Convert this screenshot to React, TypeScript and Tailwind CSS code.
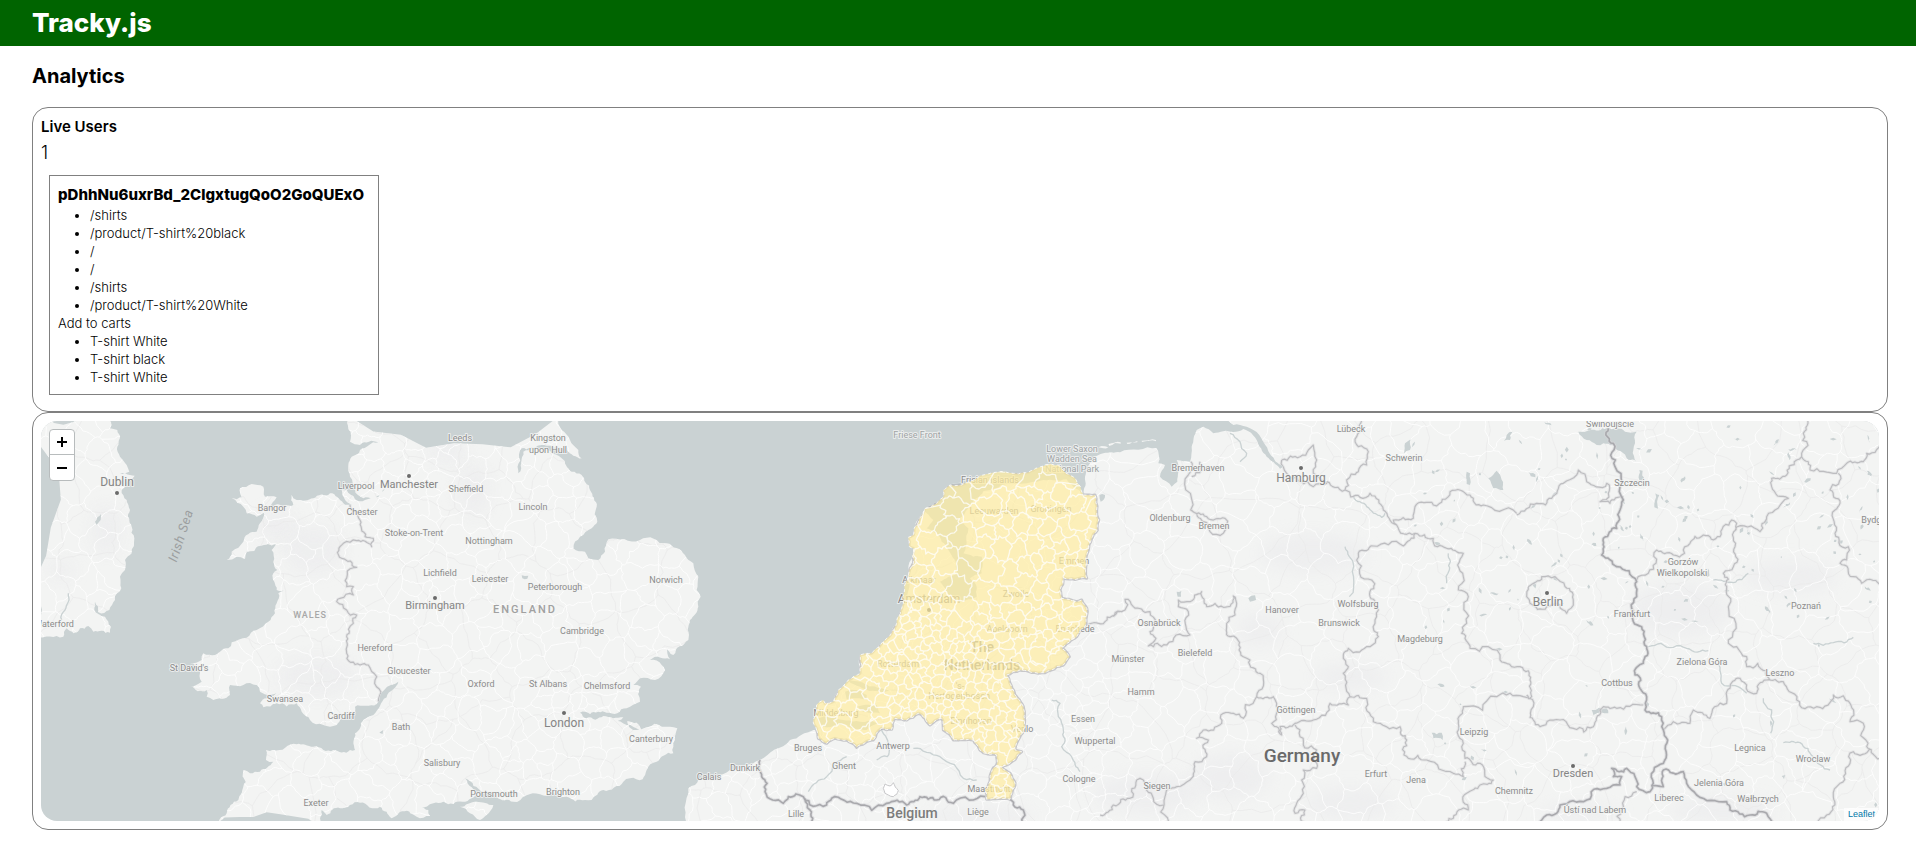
import React from "react";

type Pt = [number, number];
type Edge = { a: Pt; b: Pt; n: number };

/* Map drawing units: three per pixel, shared by every outline below. */
const UNIT = 3;
const ORIGIN = 33;
const MAP_W = 1838;
const MAP_H = 400;

const pts = (s: string, dx = 0, dy = 0): Pt[] =>
  s
    .trim()
    .split(/\s+/)
    .map((p) => {
      const [x, y] = p.split(",").map(Number);
      return [x + dx, y + dy] as Pt;
    });

const britain = (s: string) => pts(s, 930);
const lowlands = (s: string) => pts(s, 1950);
const germany = (s: string) => pts(s, 3210);
const poland = (s: string) => pts(s, 4410, -30);

const makeRandom = (seed: number) => () => {
  seed = (seed + 0x6d2b79f5) | 0;
  let t = Math.imul(seed ^ (seed >>> 15), 1 | seed);
  t = (t + Math.imul(t ^ (t >>> 7), 61 | t)) ^ t;
  return ((t ^ (t >>> 14)) >>> 0) / 4294967296;
};

/* Midpoint displacement, so straight runs read as coast or border. */
const roughen = (line: Pt[], amount: number, seed: number, closed = false): Pt[] => {
  const rnd = makeRandom(seed);
  let cur = closed ? [...line, line[0]] : line;
  for (let pass = 0; pass < 3; pass++) {
    const out: Pt[] = [cur[0]];
    for (let i = 1; i < cur.length; i++) {
      const [x1, y1] = cur[i - 1];
      const [x2, y2] = cur[i];
      const len = Math.hypot(x2 - x1, y2 - y1);
      if (len > 12 && len < 1500) {
        const k = (rnd() - 0.5) * amount;
        out.push([(x1 + x2) / 2 - (y2 - y1) * k, (y1 + y2) / 2 + (x2 - x1) * k]);
      }
      out.push(cur[i]);
    }
    cur = out;
  }
  return cur;
};

const toPath = (line: Pt[], closed = false) =>
  "M" + line.map(([x, y]) => `${x.toFixed(1)} ${y.toFixed(1)}`).join("L") + (closed ? "Z" : "");

const inside = ([x, y]: Pt, poly: Pt[]) => {
  let hit = false;
  for (let i = 0, j = poly.length - 1; i < poly.length; j = i++) {
    const [xi, yi] = poly[i];
    const [xj, yj] = poly[j];
    if (yi > y !== yj > y && x < ((xj - xi) * (y - yi)) / (yj - yi) + xi) hit = !hit;
  }
  return hit;
};

/* Voronoi edges by half-plane clipping of each cell. */
const voronoi = (seeds: Pt[], reach: number): Edge[] => {
  const edges: Edge[] = [];
  seeds.forEach((s, i) => {
    let cell: { p: Pt; n: number }[] = [
      { p: [s[0] - reach, s[1] - reach], n: -1 },
      { p: [s[0] + reach, s[1] - reach], n: -1 },
      { p: [s[0] + reach, s[1] + reach], n: -1 },
      { p: [s[0] - reach, s[1] + reach], n: -1 },
    ];
    seeds.forEach((q, j) => {
      if (i === j || Math.abs(q[0] - s[0]) > reach * 2 || Math.abs(q[1] - s[1]) > reach * 2) return;
      const nx = q[0] - s[0];
      const ny = q[1] - s[1];
      const c = (q[0] * q[0] + q[1] * q[1] - s[0] * s[0] - s[1] * s[1]) / 2;
      const side = (p: Pt) => p[0] * nx + p[1] * ny - c;
      const next: { p: Pt; n: number }[] = [];
      for (let k = 0; k < cell.length; k++) {
        const cur = cell[k];
        const nxt = cell[(k + 1) % cell.length];
        const d1 = side(cur.p);
        const d2 = side(nxt.p);
        const cut = (): Pt => {
          const t = d1 / (d1 - d2);
          return [cur.p[0] + (nxt.p[0] - cur.p[0]) * t, cur.p[1] + (nxt.p[1] - cur.p[1]) * t];
        };
        if (d1 <= 0) {
          next.push(cur);
          if (d2 > 0) next.push({ p: cut(), n: j });
        } else if (d2 <= 0) {
          next.push({ p: cut(), n: cur.n });
        }
      }
      cell = next;
    });
    cell.forEach((v, k) => {
      if (v.n > i) edges.push({ a: v.p, b: cell[(k + 1) % cell.length].p, n: v.n });
    });
  });
  return edges;
};

const edgesToPath = (edges: Edge[], amount: number, seed: number) =>
  edges.map((e, i) => toPath(roughen([e.a, e.b], amount, seed + i))).join("");

const scatter = (
  count: number,
  box: [number, number, number, number],
  radius: (p: Pt) => number,
  accept: (p: Pt) => boolean,
  seed: number,
): Pt[] => {
  const rnd = makeRandom(seed);
  const out: Pt[] = [];
  for (let i = 0; i < count; i++) {
    const p: Pt = [box[0] + rnd() * (box[2] - box[0]), box[1] + rnd() * (box[3] - box[1])];
    const loose = 0.62 + rnd() * 0.75;
    if (!accept(p)) continue;
    const r = radius(p) * loose;
    if (out.every((q) => Math.hypot(q[0] - p[0], q[1] - p[1]) > r)) out.push(p);
  }
  return out;
};

/* ---------- Coastlines ---------- */

const ireland = pts(
  "20,20 235,20 240,55 262,60 262,110 270,140 290,165 298,185 270,190 300,195 314,197 290,215 275,240 290,270 300,300 305,350 313,385 305,430 285,450 285,480 270,500 274,535 255,570 238,600 205,607 195,575 193,600 205,612 225,620 243,650 240,668 215,662 190,665 175,648 150,655 130,670 110,655 100,680 20,685",
);

const greatBritain: Pt[] = [
  ...britain("30,20 30,95 60,105 115,97 60,120 35,140 25,165 30,200 45,238 70,265 100,265 135,235 115,262 75,270 45,268 20,240"),
  ...pts(
    "935,240 965,285 940,280 900,250 850,265 800,270 785,255 790,285 735,285 700,305 690,340 680,365 640,395 605,425 590,450 620,440 645,447 650,425 690,408 738,403 725,420 730,455 742,480 730,490 733,515 740,540 770,540 745,550 740,580 735,610 715,635 680,660 650,683 605,697 595,715 570,725 555,735 520,730 515,750 480,760 510,780 515,815 480,830 530,840 530,860 550,870 600,855 600,825 640,825 680,825 690,845 720,855 740,850 710,865 690,880 700,892 740,880 800,880 815,905 840,930 880,945 920,945 935,925 975,905",
  ),
  ...britain("45,890 110,882 175,815 160,838 120,888 70,930 45,970 45,1020 30,1020 -20,1020"),
  ...pts("880,1020 850,1010 800,1003 730,1020 708,1020 708,1050 730,1055 690,1085 660,1090 640,1080 635,1150 625,1170 590,1210 550,1250 870,1250 875,1200 890,1215 930,1195"),
  ...britain(
    "60,1178 120,1190 155,1225 180,1205 230,1220 270,1218 265,1200 240,1190 280,1180 340,1182 395,1165 420,1155 375,1105 430,1145 470,1160 520,1175 600,1153 680,1160 735,1170 755,1170 790,1140 850,1115 870,1105 908,1108 920,1080 950,1055 1000,1030 1005,990 1012,955 990,950 900,960 860,945 820,935 850,922 790,918 740,925 720,908 750,912 800,908 860,895 900,875 903,830 880,825 900,805 945,810 975,780 965,765 930,750 990,748 980,710 1000,735 1045,690 1050,630 1075,590 1082,560 1070,540 1075,500 1060,460 1035,435 980,400 900,390 805,388 795,425 775,450 745,445 735,425 700,415 720,380 755,355 772,335 770,290 750,240 725,195 695,185 665,145 630,122 580,112 550,125 535,190 545,115 600,106 640,113 680,120 725,145 715,120 690,90 665,60 655,20",
  ),
];

const islands: Pt[][] = [
  pts("630,235 665,222 700,230 705,260 740,262 715,290 680,320 650,310 640,290 605,265 635,262"),
  britain("360,1190 410,1175 460,1185 440,1215 420,1230 390,1210"),
  britain("862,933 890,938 905,960 872,955"),
  lowlands("1255,112 1275,109 1285,112 1270,115"),
  germany("25,103 62,97 62,101 28,107"),
  germany("80,98 112,93 112,97 82,102"),
  germany("125,92 168,90 168,94 126,96"),
];

const dutchCoast =
  "410,960 400,930 410,885 430,870 435,880 460,875 475,840 505,810 540,790 540,735 575,730 620,685 650,640 670,580 685,500 700,415 688,410 685,382 700,375 705,350 735,295 790,262 790,240 810,225 900,197 1000,190 1060,180 1090,168 1135,165 1185,205 1210,255";

const netherlands = lowlands(
  dutchCoast +
    " 1245,255 1250,300 1252,360 1225,420 1220,505 1150,503 1140,540 1145,565 1190,575 1205,570 1222,605 1215,650 1190,680 1145,715 1168,740 1150,765 1075,790 1020,780 980,795 1000,840 1030,890 1035,950 1005,1020 1025,1025 980,1065 965,1072 990,1090 1005,1120 990,1168 920,1168 915,1140 935,1085 950,1065 950,1035 900,1020 880,990 820,990 790,960 785,925 750,945 715,910 680,930 645,925 635,958 605,955 580,990 530,1012 500,990 465,985 440,1000 415,985",
);

const continent: Pt[] = [
  ...lowlands("25,1250 25,1135 45,1125 55,1110 150,1080 240,1050 330,990 400,960"),
  ...lowlands(dutchCoast),
  ...lowlands("1215,200 1240,145 1270,130"),
  ...germany(
    "60,127 170,115 175,160 195,165 180,200 215,230 232,215 235,185 230,150 270,155 275,110 290,60 310,50 340,70 400,66 430,57 445,64 470,90 500,140 540,176 550,170 510,132 490,95 460,60 440,50 400,45 365,20",
  ),
  [5700, 20],
  [5700, 1260],
];

const dutchWater: Pt[][] = [
  lowlands(
    "730,300 755,280 790,262 792,238 900,198 908,250 865,295 835,330 865,355 860,400 850,430 880,440 905,440 905,490 870,505 890,530 890,560 840,575 800,545 780,515 830,490 825,450 805,420 785,395 770,370 740,355 760,330",
  ),
  lowlands("900,200 1000,192 1060,182 1135,167 1185,207 1205,250 1160,208 1080,212 1000,222 930,240 900,250"),
  lowlands("495,845 520,840 560,855 560,870 500,868"),
  lowlands("410,925 460,918 540,935 600,940 560,960 500,945 430,950"),
  lowlands("530,890 590,885 600,910 550,905"),
  lowlands("505,812 540,815 600,835 660,840 600,845 540,830"),
];

const inlandWater: Pt[][] = [
  poland("235,95 270,90 320,85 350,85 375,95 410,95 405,130 400,150 408,185 370,160 340,135 310,130 290,135 260,120"),
  poland("418,210 428,212 432,240 418,240"),
  poland("466,280 478,285 474,326 463,322"),
  germany("1165,205 1190,182 1210,240 1180,235"),
  germany("915,100 932,88 930,120 912,130"),
  germany("1100,185 1110,190 1110,225 1100,222"),
  germany("1220,75 1238,65 1230,90 1212,92"),
  germany("445,565 465,556 468,570 450,575"),
  germany("230,545 244,543 243,560 233,560"),
  germany("995,968 1025,968 1028,990 1000,985"),
  lowlands("1258,255 1275,255 1272,268 1262,275"),
  britain("545,496 565,497 562,506 547,505"),
  britain("118,968 130,960 128,972"),
  pts("195,335 213,312 212,330 200,345"),
  poland("275,930 320,925 325,940 280,945"),
  poland("845,1128 856,1125 852,1138"),
];

/* ---------- Borders ---------- */

const regionBorders: Pt[][] = [
  britain("30,285 60,330 75,380 100,385 95,410 50,392 10,400 5,445 50,472 20,530 40,530 40,555 0,565 -10,575 20,600 50,615 40,640 20,680 20,730 60,765 85,765 110,800 115,875"),
  lowlands("1222,645 1275,635 1320,605"),
  germany(
    "40,620 75,600 75,568 100,590 150,605 165,640 150,665 168,685 145,708 200,705 270,675 265,605 235,590 235,570 270,575 305,545 320,590 370,592 400,558 410,580 380,640 390,680 410,685 430,740 450,750 480,790 470,860 430,925 400,910 370,910 365,940 310,960 290,985 325,990 320,1040 285,1055 270,1110 230,1130 195,1160 200,1250",
  ),
  germany("0,1215 40,1185 90,1165 110,1110 130,1110 160,1165 190,1185"),
  germany(
    "470,860 520,860 530,880 515,940 545,975 540,950 585,940 640,930 690,880 745,885 750,860 730,790 745,770 730,735 745,715 810,710 835,680 825,640 835,600 810,560 815,510 770,450 775,430 820,408 910,408 945,370",
  ),
  germany("545,150 600,140 625,120 640,105 650,150 640,190 680,220 640,230 600,215 560,190 545,150"),
  germany("680,215 735,240 780,262 810,250 850,300 890,345 945,370 1000,385 1040,415 1090,430 1090,500 1075,540 1105,560 1100,640 1085,670 1110,715 1200,750 1260,770 1290,810 1295,860 1270,860 1190,860 1090,890 1075,940 1085,1010 1095,1045 1140,1060 1180,1110 1140,1125 1100,1150 1105,1200 1060,1225 1020,1250"),
  poland("80,885 100,920 100,960 120,980 150,960 220,985 280,980 300,930 350,925 430,915"),
  germany("750,860 800,865 820,935 900,950 920,990 925,1045 980,1050 1060,1090 1090,1100 1095,1055"),
  germany("585,945 600,980 650,1020 640,1050 650,1075 610,1080 605,1110 610,1150 590,1180 585,1210 615,1200 612,1250"),
  germany("735,240 740,210 775,185 800,165 805,125 775,110 770,80 800,20"),
  germany("890,345 880,330 940,325 945,290 1000,285 1050,245 1110,255 1150,285 1250,310"),
  poland("50,345 110,310 155,295 190,250 230,225 235,210 260,245 320,250 325,280 300,305 330,310 370,290"),
  germany("272,155 275,180 272,300 320,320 375,325 380,345 370,370 330,365 310,335 275,300"),
  germany("275,200 305,180 300,155"),
  poland("410,540 445,520 470,450 520,465 570,430 610,405 660,410 695,360 710,370 705,440 700,500 670,520 680,560 685,620 685,720 710,740 740,770 740,800 800,812 810,840"),
  poland("705,392 780,395 800,350 865,295 815,260 815,235 860,225 890,180 905,170 910,100 915,50"),
  poland("905,170 930,210 1010,220 1040,190 1090,185 1100,160 1150,125"),
  poland("1015,220 990,270 1020,310 1005,330 1005,400 1045,440 1040,480 1020,490 1060,530 1085,550 1150,555"),
  poland("490,990 520,965 570,970 580,930 630,955 680,910 690,865 720,835 770,880 800,840 850,845 890,900 950,920 1000,885 1050,910 1050,965 1090,970 1100,1040 1150,1075"),
  poland("1110,1045 1060,1055 1050,1090 1020,1150 1000,1190 980,1245 950,1270"),
  poland("85,560 125,530 165,530 195,560 220,605 200,640 180,615 140,620 90,610 80,590 85,560"),
  poland("410,1175 375,1190 360,1270"),
];

const nationalBorders: Pt[][] = [
  lowlands("240,1050 245,1100 255,1145 310,1180 325,1160 370,1160 440,1185 455,1165 530,1180 620,1180 680,1185 720,1160 770,1170 820,1180 915,1160"),
  lowlands("375,1165 390,1200 395,1250"),
  lowlands("990,1168 1030,1200 1045,1250"),
  poland(
    "325,85 340,130 345,200 370,300 360,330 350,385 310,415 305,465 350,500 410,545 410,590 395,625 400,665 425,680 440,740 430,790 405,825 420,865 440,890 435,930 485,950 490,990 503,1020 490,1090 460,1150 450,1175 410,1160 405,1130 380,1105 335,1105 340,1130 365,1130 360,1155 320,1165 260,1200 180,1215 170,1240 140,1245 110,1275",
  ),
  poland("455,1158 490,1160 490,1110 550,1115 560,1150 590,1185 680,1205 690,1230 750,1245 800,1240 820,1275"),
];

/* ---------- Generated detail ---------- */

const landPath = [
  toPath(roughen(ireland, 0.35, 3, true), true),
  toPath(roughen(greatBritain, 0.35, 5, true), true),
  toPath(roughen(continent, 0.2, 7, true), true),
  ...islands.map((p, i) => toPath(roughen(p, 0.3, 20 + i, true), true)),
].join("");

const cities: [number, number, number][] = [
  [1600, 915, 110], [1215, 560, 70], [1140, 220, 90], [1290, 110, 80], [870, 860, 70],
  [3120, 900, 110], [3170, 1130, 70], [3810, 190, 60], [4550, 575, 60], [2550, 1130, 60],
  [4630, 1150, 50], [5330, 1080, 40], [2350, 1210, 50], [1500, 1060, 60],
];

const roadSeeds = scatter(
  5000,
  [0, 0, 5650, 1260],
  ([x, y]) => {
    const c = cities.find(([cx, cy, r]) => Math.hypot(x - cx, y - cy) < r);
    if (c) return 20;
    return x < 2200 ? 52 : x < 3500 ? 62 : 80;
  },
  () => true,
  11,
);
const roadPath = edgesToPath(voronoi(roadSeeds, 170), 0.4, 400);

const minorSeeds = scatter(900, [0, 0, 5650, 1260], () => 105, () => true, 77);
const minorPath = edgesToPath(voronoi(minorSeeds, 300), 0.3, 900);

const lakeSeeds = lowlands(
  "760,325 850,245 825,300 750,395 860,380 875,445 860,475 800,455 830,530 960,215 1045,195 1130,190 940,475 910,550 860,600",
);
const municipalitySeeds = [
  ...lakeSeeds,
  ...scatter(
    5200,
    [2340, 150, 3220, 1180],
    (p) => {
      const x = p[0] - 1950;
      const y = p[1];
      if (x < 600 && y > 780) return 48;
      if (y > 1070) return 17;
      if (y < 500 && x < 860) return y > 420 ? 24 : 50;
      if (y < 560) return 40;
      if (x > 950 && y < 780) return 34;
      return 25;
    },
    (p) => inside(p, netherlands) && lakeSeeds.every((q) => Math.hypot(q[0] - p[0], q[1] - p[1]) > 52),
    42,
  ),
];
const municipalityPath = edgesToPath(voronoi(municipalitySeeds, 200), 0.7, 1300);
const netherlandsPath = toPath(roughen(netherlands, 0.22, 9, true), true);
const dutchWaterPaths = dutchWater.map((w, i) => toPath(roughen(w, 0.2, 50 + i, true), true));

const pondPath = (() => {
  const rnd = makeRandom(31);
  let d = "";
  for (let i = 0; i < 150; i++) {
    const x = 4150 + rnd() * 1400;
    const y = 40 + rnd() * (rnd() > 0.35 ? 600 : 1150);
    const a = rnd() * Math.PI;
    const l = 3 + rnd() * 11;
    const w = 2 + rnd() * 4;
    const ux = Math.cos(a);
    const uy = Math.sin(a);
    const blob: Pt[] = [
      [x - ux * l, y - uy * l],
      [x - uy * w, y + ux * w],
      [x + ux * l, y + uy * l],
      [x + uy * w, y - ux * w],
    ];
    d += toPath(roughen(blob, 0.6, 700 + i, true), true);
  }
  return d;
})();

const waterPath = inlandWater.map((w, i) => toPath(roughen(w, 0.35, 80 + i, true), true)).join("") + pondPath;

const riverPath = [
  lowlands("605,955 620,985 622,1040 590,1050"),
  lowlands("385,1145 440,1100 500,1040"),
  lowlands("700,1015 780,1040 850,1105 890,1110"),
  lowlands("1115,870 1140,880 1135,920 1150,960 1145,1010 1175,1040 1200,1085"),
  germany("390,70 420,95 440,130 420,155"),
  germany("735,410 748,440 748,560"),
  germany("760,260 800,290 845,322 855,310"),
  germany("1045,430 1048,480 1040,520"),
  poland("445,740 520,742 560,745 625,752"),
  poland("650,790 665,850 740,880"),
  poland("790,895 815,930 812,1000"),
  poland("850,1028 900,1028 940,1070 990,1110"),
  poland("940,730 1000,728 1060,712"),
  poland("640,540 700,548 745,520"),
  pts("115,550 105,600 95,630"),
]
  .map((r, i) => toPath(roughen(r, 0.35, 150 + i)))
  .join("");

const regionPath = regionBorders.map((b, i) => toPath(roughen(b, 0.55, 200 + i))).join("");
const nationalPath = nationalBorders.map((b, i) => toPath(roughen(b, 0.5, 300 + i))).join("");
const brusselsPath = toPath(
  roughen(lowlands("610,1135 615,1122 630,1128 640,1118 655,1142 640,1160 625,1155 615,1150"), 0.3, 61, true),
  true,
);

const hills: [number, number, number, number][] = [
  [230, 360, 45, 75], [740, 350, 60, 50], [850, 420, 90, 70], [860, 800, 120, 60], [1330, 240, 50, 80],
  [1250, 120, 60, 40], [3690, 660, 70, 50], [3960, 800, 110, 40], [3350, 1150, 160, 60], [3960, 1180, 130, 50],
  [5080, 1200, 160, 40], [4650, 1210, 120, 30], [3600, 1100, 120, 70], [2850, 1220, 160, 30], [90, 480, 40, 30],
  [3850, 430, 160, 60], [5280, 500, 140, 50], [4950, 600, 150, 80],
];

/* ---------- Labels ---------- */

type Label = [text: string, x: number, y: number, kind?: "town" | "city" | "capital" | "marine"];

const labels: Label[] = [
  ["Dublin", 261, 228, "capital"],
  ["Bangor", 726, 302],
  ["Waterford", 72, 650],
  ["St David's", 476, 784],
  ["Swansea", 765, 876],
  ["Cardiff", 934, 926],
  ["Exeter", 857, 1189],
  ["Liverpool", 977, 236],
  ["Leeds", 1291, 92],
  ["Kingston", 1555, 94],
  ["upon Hull", 1555, 128],
  ["Manchester", 1138, 234, "city"],
  ["Sheffield", 1307, 245],
  ["Lincoln", 1510, 299],
  ["Chester", 996, 314],
  ["Stoke-on-Trent", 1152, 379],
  ["Nottingham", 1377, 402],
  ["Lichfield", 1229, 499],
  ["Leicester", 1381, 516],
  ["Peterborough", 1575, 539],
  ["Norwich", 1909, 519],
  ["Birmingham", 1214, 596, "city"],
  ["Cambridge", 1655, 671],
  ["Hereford", 1034, 723],
  ["Gloucester", 1138, 791],
  ["Oxford", 1353, 831],
  ["St Albans", 1553, 831],
  ["Chelmsford", 1730, 836],
  ["London", 1601, 950, "capital"],
  ["Bath", 1113, 961],
  ["Canterbury", 1864, 996],
  ["Salisbury", 1236, 1068],
  ["Portsmouth", 1393, 1161],
  ["Brighton", 1598, 1156],
  ["Calais", 2037, 1111],
  ["Dunkirk", 2146, 1082],
  ["Lille", 2299, 1220],
  ["Bruges", 2333, 1022],
  ["Ghent", 2442, 1076],
  ["Antwerp", 2589, 1017],
  ["Liège", 2845, 1216],
  ["Maastricht", 2876, 1145],
  ["Friese Front", 2660, 85, "marine"],
  ["Lower Saxon", 3127, 127, "marine"],
  ["Wadden Sea", 3127, 156, "marine"],
  ["National Park", 3127, 186, "marine"],
  ["Frisian Islands", 2880, 220],
  ["Leeuwarden", 2893, 311],
  ["Groningen", 3063, 305],
  ["Emmen", 3133, 461],
  ["Alkmaar", 2666, 518],
  ["Amsterdam", 2697, 580, "capital"],
  ["Zwolle", 2959, 561],
  ["Apeldoorn", 2930, 666],
  ["Enschede", 3134, 666],
  ["Rotterdam", 2603, 770],
  ["'s-", 2790, 838],
  ["Hertogenbosch", 2787, 868],
  ["Eindhoven", 2824, 942],
  ["Middelburg", 2419, 919],
  ["Venlo", 2976, 965],
  ["Essen", 3160, 935],
  ["Wuppertal", 3195, 1002],
  ["Cologne", 3148, 1115],
  ["Bremerhaven", 3504, 182],
  ["Hamburg", 3813, 215, "capital"],
  ["Lübeck", 3963, 66],
  ["Schwerin", 4121, 154],
  ["Oldenburg", 3421, 334],
  ["Bremen", 3552, 357],
  ["Hanover", 3755, 609],
  ["Wolfsburg", 3984, 592],
  ["Brunswick", 3928, 648],
  ["Magdeburg", 4170, 696],
  ["Osnabrück", 3386, 647],
  ["Münster", 3293, 755],
  ["Bielefeld", 3494, 738],
  ["Hamm", 3334, 856],
  ["Göttingen", 3798, 908],
  ["Leipzig", 4333, 976],
  ["Siegen", 3381, 1137],
  ["Erfurt", 4038, 1101],
  ["Jena", 4159, 1119],
  ["Chemnitz", 4452, 1152],
  ["Świnoujście", 4740, 50],
  ["Szczecin", 4807, 227],
  ["Gorzów", 4958, 465],
  ["Wielkopolski", 4957, 499],
  ["Bydgoszcz", 5558, 340],
  ["Berlin", 4553, 588, "capital"],
  ["Frankfurt", 4807, 620],
  ["Poznań", 5327, 597],
  ["Zielona Góra", 5015, 765],
  ["Cottbus", 4760, 829],
  ["Leszno", 5250, 798],
  ["Legnica", 5159, 1022],
  ["Wroclaw", 5349, 1056],
  ["Dresden", 4629, 1101, "city"],
  ["Jelenia Góra", 5066, 1128],
  ["Wałbrzych", 5185, 1175],
  ["Liberec", 4918, 1173],
  ["Ústí nad Labem", 4695, 1209],
];

const labelStyle = {
  town: "fill-[#8c8c8c] text-[9px]",
  city: "fill-[#858585] text-[11px]",
  capital: "fill-[#858585] text-[12px]",
  marine: "fill-[#a0a4a5] text-[9px]",
};

const cityDots: Pt[] = [
  [261, 248], [1138, 199], [1215, 564], [1601, 908], [2697, 600], [3812, 174], [4551, 549], [4630, 1068],
];

const px = (v: number) => Math.round((v - ORIGIN) / UNIT);

function EuropeMap() {
  return (
    <svg
      className="block h-full w-full font-['Roboto','Noto_Sans',sans-serif]"
      viewBox={`0 0 ${MAP_W} ${MAP_H}`}
      preserveAspectRatio="xMidYMid slice"
      role="img"
      aria-label="Map of north-western Europe"
    >
      <defs>
        <clipPath id="land-clip">
          <path d={landPath} />
        </clipPath>
        <clipPath id="netherlands-clip">
          <path d={netherlandsPath} />
        </clipPath>
        <filter id="soften" x="-50%" y="-50%" width="200%" height="200%">
          <feGaussianBlur stdDeviation="22" />
        </filter>
      </defs>
      <rect width={MAP_W} height={MAP_H} fill="#cad2d3" />
      <g transform={`scale(${1 / UNIT}) translate(${-ORIGIN} ${-ORIGIN})`} fill="none" strokeLinejoin="round">
        <path d={landPath} fill="#f3f4f3" />
        <g clipPath="url(#land-clip)">
          {hills.map(([cx, cy, rx, ry]) => (
            <ellipse key={`${cx}-${cy}`} cx={cx} cy={cy} rx={rx} ry={ry} fill="#ebebed" filter="url(#soften)" opacity="0.6" />
          ))}
          <path d={minorPath} stroke="#eaebeb" strokeWidth="2.5" />
          <path d={roadPath} stroke="#ffffff" strokeWidth="3" opacity="0.8" />
          <path d={riverPath} stroke="#cad2d3" strokeWidth="4" />
          <path d={waterPath} fill="#cad2d3" />
          {dutchWaterPaths.map((d) => (
            <path key={d} d={d} fill="#cad2d3" />
          ))}
          <path d={regionPath} stroke="#dedee0" strokeWidth="9" opacity="0.6" />
          <path d={regionPath} stroke="#bdbdc0" strokeWidth="3.5" />
          <path d={brusselsPath} fill="#ffffff" stroke="#c8c8ca" strokeWidth="3" />
          <path d={nationalPath} stroke="#d6d6d8" strokeWidth="11" opacity="0.6" />
          <path d={nationalPath} stroke="#a9a9ad" strokeWidth="5" />
          <path d={netherlandsPath} stroke="#b4b4b8" strokeWidth="9" opacity="0.7" />
        </g>
      </g>
      <g textAnchor="middle" strokeLinejoin="round">
        {cityDots.map(([x, y]) => (
          <circle key={`${x}-${y}`} cx={px(x)} cy={px(y)} r="2" fill="#6b6b6b" />
        ))}
        {labels.map(([text, x, y, kind = "town"]) => (
          <text
            key={text}
            x={px(x)}
            y={px(y)}
            className={labelStyle[kind]}
            stroke="#f3f4f3"
            strokeOpacity="0.8"
            strokeWidth="2"
            paintOrder="stroke"
          >
            {text}
          </text>
        ))}
        <text x={px(840)} y={px(625)} className="fill-[#a8a8a8] text-[9px] font-medium tracking-widest">WALES</text>
        <text x={px(1484)} y={px(608)} className="fill-[#a0a0a0] text-[11px] font-medium tracking-[2px]">ENGLAND</text>
        <text
          transform={`translate(${px(465)} ${px(382)}) rotate(-72)`}
          className="fill-[#9c9fa0] text-[13px] italic tracking-wider"
        >
          Irish Sea
        </text>
        <text x={px(2647)} y={px(1223)} className="fill-[#7c7c7c] text-[14px] font-medium">Belgium</text>
        <text x={px(3817)} y={px(1057)} className="fill-[#6a6a6a] text-[19px] font-medium">Germany</text>
        <text x={px(2855)} y={px(727)} className="fill-[#8a8a8a] text-[14px] font-medium">The</text>
        <text x={px(2855)} y={px(781)} className="fill-[#8a8a8a] text-[14px] font-medium">Netherlands</text>
      </g>
      <g transform={`scale(${1 / UNIT}) translate(${-ORIGIN} ${-ORIGIN})`} fill="none" strokeLinejoin="round">
        <path d={netherlandsPath} fill="#ffeda0" fillOpacity="0.7" />
        <g clipPath="url(#netherlands-clip)">
          <path d={municipalityPath} stroke="#ffffff" strokeWidth="4" opacity="0.75" />
        </g>
        <path d={netherlandsPath} stroke="#ffffff" strokeWidth="3" strokeDasharray="9" opacity="0.8" />
      </g>
    </svg>
  );
}

const visitedPages = [
  "/shirts",
  "/product/T-shirt%20black",
  "/",
  "/",
  "/shirts",
  "/product/T-shirt%20White",
];

const cartItems = ["T-shirt White", "T-shirt black", "T-shirt White"];

function BulletList({ items }: { items: string[] }) {
  return (
    <ul className="list-disc pl-8">
      {items.map((item, i) => (
        <li key={i}>{item}</li>
      ))}
    </ul>
  );
}

export default function App() {
  return (
    <div className="min-h-screen bg-white font-['Inter','Noto_Sans',sans-serif] text-black">
      <header className="flex h-[46px] items-center bg-[#006400] pl-8">
        <h1 className="text-[26px] font-extrabold leading-9 text-white">Tracky.js</h1>
      </header>
      <main className="pl-8 pr-7 pt-4">
        <h2 className="mb-4 text-[20px] font-bold leading-[29px]">Analytics</h2>

        <section className="rounded-2xl border border-[#808080] p-2">
          <h3 className="text-[15px] font-semibold leading-[22px]">Live Users</h3>
          <p className="text-[18px] font-light leading-[29px]">1</p>
          <article className="m-2 w-fit min-w-[330px] border border-[#808080] p-2 text-[13px] font-light leading-[18px]">
            <h4 className="text-[15px] font-extrabold leading-[22px]">pDhhNu6uxrBd_2ClgxtugQoO2GoQUExO</h4>
            <BulletList items={visitedPages} />
            <p>Add to carts</p>
            <BulletList items={cartItems} />
          </article>
        </section>

        <section className="rounded-2xl border border-[#808080] p-2">
          <div className="relative h-[400px] overflow-hidden rounded-2xl">
            <EuropeMap />
            <div className="absolute left-2 top-2 flex flex-col overflow-hidden rounded border border-[#b8bcbd] bg-white">
              <button
                type="button"
                aria-label="Zoom in"
                className="flex h-[25px] w-6 items-center justify-center border-b border-[#b8bcbd]"
              >
                <svg className="size-3" viewBox="0 0 12 12" fill="none" stroke="#000" strokeWidth="2">
                  <path d="M1 6h10M6 1v10" />
                </svg>
              </button>
              <button type="button" aria-label="Zoom out" className="flex h-[25px] w-6 items-center justify-center">
                <svg className="size-3" viewBox="0 0 12 12" fill="none" stroke="#000" strokeWidth="2">
                  <path d="M1 6h10" />
                </svg>
              </button>
            </div>
            <a
              href="https://leafletjs.com"
              className="absolute bottom-0 right-0 bg-white/70 px-1 font-['Liberation_Sans',sans-serif] text-[9px] leading-[13px] text-[#0078a8]"
            >
              Leaflet
            </a>
          </div>
        </section>
      </main>
    </div>
  );
}
